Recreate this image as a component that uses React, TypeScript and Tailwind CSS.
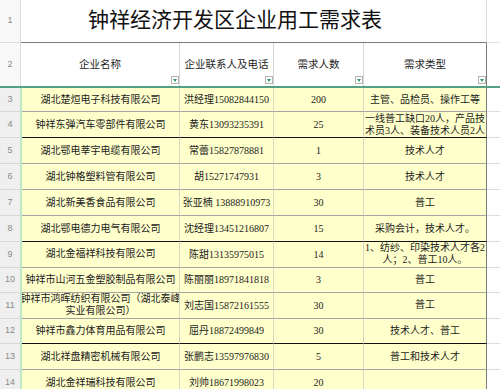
import React from "react";

type Row = {
  n: number;
  h: string;
  a: string[];
  b: string;
  c: string;
  d: string[];
  thick: boolean;
};

const rows: Row[] = [
  { n: 3, h: "h-[24px]", a: ["湖北楚烜电子科技有限公司"], b: "洪经理15082844150", c: "200", d: ["主管、品检员、操作工等"], thick: false },
  { n: 4, h: "h-[26px]", a: ["钟祥东弹汽车零部件有限公司"], b: "黄东13093235391", c: "25", d: ["一线普工缺口20人，产品技", "术员3人、装备技术人员2人"], thick: true },
  { n: 5, h: "h-[26px]", a: ["湖北鄂电莘宇电缆有限公司"], b: "常蕾15827878881", c: "1", d: ["技术人才"], thick: false },
  { n: 6, h: "h-[26px]", a: ["湖北钟格塑料管有限公司"], b: "胡15271747931", c: "3", d: ["技术人才"], thick: false },
  { n: 7, h: "h-[26px]", a: ["湖北新美香食品有限公司"], b: "张亚楠 13888910973", c: "30", d: ["普工"], thick: false },
  { n: 8, h: "h-[26px]", a: ["湖北鄂电德力电气有限公司"], b: "沈经理13451216807", c: "15", d: ["采购会计，技术人才。"], thick: true },
  { n: 9, h: "h-[25.5px]", a: ["湖北金福祥科技有限公司"], b: "陈甜13135975015", c: "14", d: ["1、纺纱、印染技术人才各2", "人；2、普工10人。"], thick: false },
  { n: 10, h: "h-[25.5px]", a: ["钟祥市山河五金塑胶制品有限公司"], b: "陈丽丽18971841818", c: "3", d: ["普工"], thick: false },
  { n: 11, h: "h-[25.5px]", a: ["钟祥市鸿晖纺织有限公司（湖北泰峰", "实业有限公司）"], b: "刘志国15872161555", c: "30", d: ["普工"], thick: false },
  { n: 12, h: "h-[25.5px]", a: ["钟祥市鑫力体育用品有限公司"], b: "屈丹18872499849", c: "30", d: ["技术人才、普工"], thick: true },
  { n: 13, h: "h-[26px]", a: ["湖北祥盘精密机械有限公司"], b: "张鹏志13597976830", c: "5", d: ["普工和技术人才"], thick: false },
  { n: 14, h: "h-[26px]", a: ["湖北金祥瑞科技有限公司"], b: "刘帅18671998023", c: "20", d: [], thick: false },
];

function Filter() {
  return (
    <span className="absolute right-0 bottom-[2px] w-[8px] h-[8px] bg-white border border-[#b4b4b4] flex items-center justify-center">
      <span className="w-0 h-0 border-l-[2.5px] border-r-[2.5px] border-t-[3px] border-l-transparent border-r-transparent border-t-[#2f9a5f]" />
    </span>
  );
}

function Lines({ lines }: { lines: string[] }) {
  return (
    <>
      {lines.map((l, i) => (
        <span key={i} className="whitespace-nowrap leading-[12px]">
          {l}
        </span>
      ))}
    </>
  );
}

export default function App() {
  return (
    <div className="w-[500px] h-[389px] overflow-hidden bg-white text-[#1c1c1c] font-['Liberation_Serif','Noto_Sans_CJK_SC',serif]">
      {/* Row 1 - title */}
      <div className="grid grid-cols-[21px_466px_1fr] h-[43px]">
        <div className="bg-[#f8f8f8] border-r border-r-[#dcdcdc] border-b border-b-[#dcdcdc] flex items-center justify-center text-[9px] text-[#8a8a8a] font-['Liberation_Sans',sans-serif]">
          1
        </div>
        <div className="border-b border-b-[#7a7a7a] border-r border-r-[#dcdcdc] flex items-center pl-[67px] pb-[5px] text-[21px] text-[#111] font-['Noto_Sans_CJK_SC',sans-serif] whitespace-nowrap">
          钟祥经济开发区企业用工需求表
        </div>
        <div className="border-b border-b-[#e2e2e2]" />
      </div>

      {/* Row 2 - headers */}
      <div className="grid grid-cols-[21px_159px_94px_90px_123px_1fr] h-[43px] text-[10.5px]">
        <div className="bg-[#f8f8f8] border-r border-r-[#dcdcdc] flex items-center justify-center text-[9px] text-[#8a8a8a] font-['Liberation_Sans',sans-serif]">
          2
        </div>
        <div className="relative border-r border-r-[#d6d6d6] flex items-center justify-center">
          企业名称
          <Filter />
        </div>
        <div className="relative border-r border-r-[#d6d6d6] flex items-center justify-center whitespace-nowrap">
          企业联系人及电话
          <Filter />
        </div>
        <div className="relative border-r border-r-[#d6d6d6] flex items-center justify-center">
          需求人数
          <Filter />
        </div>
        <div className="relative border-r border-r-[#7a7a7a] flex items-center justify-center">
          需求类型
          <Filter />
        </div>
        <div />
      </div>

      {/* frozen pane line */}
      <div className="h-[2px] bg-[#55a083]" />

      {/* Data rows */}
      {rows.map((r) => (
        <div key={r.n} className={`grid grid-cols-[22px_158px_94px_90px_123px_1fr] ${r.h} text-[10px]`}>
          <div className="bg-[#efefef] border-r-2 border-r-[#bfe8c4] border-b border-b-[#d8d8d8] flex items-center justify-center text-[9px] text-[#8a8a8a] font-['Liberation_Sans',sans-serif]">
            {r.n}
          </div>
          <div
            className={`bg-[#ffffcc] border-r border-r-[#d6d6c4] border-b ${
              r.thick ? "border-b-[#111]" : "border-b-[#a4a4a4]"
            } flex flex-col items-center justify-center overflow-hidden`}
          >
            <Lines lines={r.a} />
          </div>
          <div
            className={`bg-[#ffffcc] border-r border-r-[#d6d6c4] border-b ${
              r.thick ? "border-b-[#111]" : "border-b-[#a4a4a4]"
            } flex items-center justify-center overflow-hidden whitespace-nowrap`}
          >
            {r.b}
          </div>
          <div
            className={`bg-[#ffffcc] border-r border-r-[#d6d6c4] border-b ${
              r.thick ? "border-b-[#111]" : "border-b-[#a4a4a4]"
            } flex items-center justify-center`}
          >
            {r.c}
          </div>
          <div
            className={`bg-[#ffffcc] border-r border-r-[#7a7a7a] border-b ${
              r.thick ? "border-b-[#111]" : "border-b-[#a4a4a4]"
            } flex flex-col items-center justify-center overflow-hidden`}
          >
            <Lines lines={r.d} />
          </div>
          <div className="bg-white border-b border-b-[#dcdcdc]" />
        </div>
      ))}
    </div>
  );
}
